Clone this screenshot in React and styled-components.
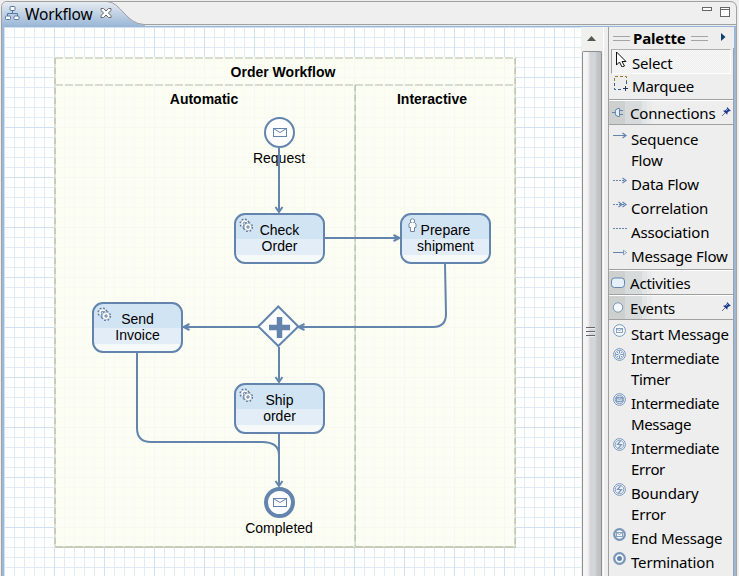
import React from "react";
import styled, { createGlobalStyle } from "styled-components";

const LINE = "#6284ad";
const GRAY = "#a0a0a0";

const GlobalStyle = createGlobalStyle`
  * { box-sizing: border-box; }
  body { margin: 0; background: #eeeeee; overflow: hidden; }
`;

const Window = styled.div`
  display: flex;
  flex-direction: column;
  width: 739px;
  height: 576px;
  background: #eeeeee;
  color: #000;
  font-family: "Noto Sans", "Open Sans", sans-serif;
  overflow: hidden;
`;

const TabBar = styled.header`
  position: relative;
  display: flex;
  align-items: center;
  height: 27px;
  flex: none;
`;
const TabShape = styled.svg`
  position: absolute;
  inset: 0;
`;
const TabIcon = styled.svg`
  position: relative;
  flex: none;
  margin: 0 5px 1px 4px;
`;
const TabTitle = styled.span`
  position: relative;
  width: 70px;
  font-size: 15.5px;
  letter-spacing: -0.15px;
  line-height: 20px;
  padding-top: 1px;
  white-space: nowrap;
`;
const CloseIcon = styled.svg`
  position: relative;
  flex: none;
  margin: -2px 0 0 5px;
`;
const WindowButtons = styled.svg`
  position: relative;
  margin: -5px 8px 0 auto;
`;

const Body = styled.main`
  display: grid;
  grid-template-columns: 577px 21px 6px 126px;
  height: 549px;
  margin-left: 1px;
  width: 736px;
  border-left: 1px solid ${GRAY};
  border-right: 1px solid ${GRAY};
  padding: 0 2px;
  background: #9cb8d8;
`;

const Canvas = styled.section`
  position: relative;
  overflow: hidden;
  font-family: "Liberation Sans", Arial, sans-serif;
  font-size: 14px;
  line-height: 16px;
  background-color: #fff;
  background-image:
    linear-gradient(90deg, #cfe1f2 1px, transparent 1px),
    linear-gradient(#cfe1f2 1px, transparent 1px),
    linear-gradient(90deg, #e0ebf8 1px, transparent 1px),
    linear-gradient(#e0ebf8 1px, transparent 1px);
  background-size: 50px 50px, 50px 50px, 10px 10px, 10px 10px;
`;

const Pool = styled.div`
  position: absolute;
  left: 50px;
  top: 30px;
  width: 462px;
  height: 491px;
  background: rgba(253, 254, 241, 0.84);
`;
const PoolTitle = styled.div`
  height: 28px;
  padding-top: 7px;
  padding-right: 4px;
  text-align: center;
  font-weight: bold;
`;
const Lanes = styled.div`
  display: grid;
  grid-template-columns: 300px 162px;
`;
const LaneTitle = styled.div`
  padding-top: 6px;
  text-align: center;
  font-weight: bold;
  padding-right: ${(p) => p.$shift || 0}px;
`;

const Drawing = styled.svg`
  position: absolute;
  inset: 0;
`;

const Task = styled.div`
  position: absolute;
  left: ${(p) => p.$x - 4}px;
  top: ${(p) => p.$y - 27}px;
  width: 91px;
  height: 51px;
  padding-top: 7px;
  border: 2px solid ${LINE};
  border-radius: 11px;
  text-align: center;
  white-space: pre-line;
  background: linear-gradient(#d1e4f4 0 24px, #e3edf8 24px 40px, #f5f9fa 40px);
`;
const TaskIcon = styled.svg`
  position: absolute;
  left: 3px;
  top: 3px;
`;
const NodeLabel = styled.div`
  position: absolute;
  left: 225px;
  width: 100px;
  top: ${(p) => p.$y}px;
  text-align: center;
`;

const ScrollBar = styled.div`
  display: flex;
  flex-direction: column;
  background: #f0f0ee;
`;
const ScrollArrow = styled.svg`
  flex: none;
  display: block;
`;
const Thumb = styled.div`
  flex: 1;
  display: flex;
  justify-content: center;
  margin-left: 1px;
  padding-top: 275px;
  padding-right: 3px;
  border: 1px solid #8e8e8e;
  border-bottom: 0;
  border-radius: 2px 2px 0 0;
  background: linear-gradient(90deg, #f5f5f5 0 4px, #e7e7e9 6px, #d4d5d9 7px 12px, #c5c6ca 14px, #bcbdbd);
`;
const Splitter = styled.div`
  background: linear-gradient(90deg, #eeeeee 0 1px, #fff 1px 2px, #eeeeee 2px);
`;

const Palette = styled.aside`
  display: flex;
  flex-direction: column;
  border-left: 1px solid ${GRAY};
  background: #eeeeee;
  overflow: hidden;
`;
const PaletteHead = styled.div`
  display: flex;
  align-items: center;
  height: 21px;
  padding: 1px 0 0 4px;
  font-weight: bold;
  font-size: 15px;
  letter-spacing: -0.15px;
`;
const Grip = styled.span`
  width: 17px;
  height: 5px;
  border: solid #a4a4a4;
  border-width: 1px 0;
`;
const PaletteName = styled.span`
  width: 54px;
  margin: 0 4px 0 3px;
  white-space: nowrap;
`;
const HeadArrow = styled.svg`
  margin: -3px 0 0 13px;
`;
const PaletteBody = styled.div`
  display: flex;
  flex-direction: column;
  flex: 1;
  border-right: 1px solid ${GRAY};
`;
const Tool = styled.div`
  display: flex;
  align-items: flex-start;
  height: ${(p) => (p.$active ? 25 : 26)}px;
  margin: 0 2px;
  margin-top: ${(p) => (p.$active ? 1 : 0)}px;
  border: 1px solid ${(p) => (p.$active ? "#fff" : "transparent")};
  border-top-color: ${(p) => (p.$active ? "#b0b0b0" : "transparent")};
  border-left-color: ${(p) => (p.$active ? "#a0a0a0" : "transparent")};
  background: ${(p) => (p.$active ? "repeating-conic-gradient(#eeeeee 0 25%, #f8f8f8 0 50%) 0 0 / 2px 2px" : "none")};
`;
const Drawer = styled.div`
  display: flex;
  align-items: center;
  flex: none;
  height: 25px;
  padding: 0 2px 0 1px;
  border-top: 1px solid #fff;
  border-bottom: 1px solid ${GRAY};
  box-shadow: 0 -1px ${GRAY};
  background: linear-gradient(90deg, #cdd0ce 0 16px, #d8dbdb 16px 33px, #e1e5e6 33px 38px, #e8eaeb 38px 43px, #eeeeee 43px);
`;
const Entries = styled.div`
  display: flex;
  flex-direction: column;
  flex: none;
  padding: 2px 0 2px 3px;
`;
const Entry = styled.div`
  display: flex;
  align-items: flex-start;
  padding: 1px 0;
`;
const IconSlot = styled.svg`
  flex: none;
  width: 16px;
  height: 16px;
  margin-right: ${(p) => p.$gap ?? 3}px;
  margin-top: ${(p) => p.$top || 0}px;
`;
const Text = styled.span`
  font-size: 15px;
  line-height: 21px;
  letter-spacing: ${(p) => p.$ls ?? -0.2}px;
  white-space: pre;
  padding-top: ${(p) => p.$top || 0}px;
`;
const Pin = styled.svg`
  margin: -3px 0 0 auto;
`;

const GearPaths = ({ x, y }) => (
  <g transform={`translate(${x} ${y})`}>
    <circle r="4.200" fill="#fff" stroke="#587496" strokeWidth="1.800" strokeDasharray="1.650 1.650" />
    <circle r="3.700" fill="#fff" stroke="#8199b6" strokeWidth=".5" />
    <circle r="1.200" fill="#d1e4f4" stroke="#587496" strokeWidth=".9" />
  </g>
);

const Gears = () => (
  <TaskIcon width="16" height="16" viewBox="0 0 16 16">
    <GearPaths x={5.5} y={5.5} />
    <GearPaths x={9} y={9} />
  </TaskIcon>
);

const Person = () => (
  <TaskIcon width="16" height="16" viewBox="0 0 16 16">
    <path d="M5.5 4.500L4 6v3.500h1.500V13.500h4V9.500H11V6L9.500 4.500z" fill="#fff" stroke="#7187a3" />
    <circle cx="7.500" cy="3" r="2.200" fill="#fff" stroke="#7187a3" />
    <path d="M6 5h3v8H6z" fill="#fff" />
  </TaskIcon>
);

const Envelope = ({ y }) => (
  <g fill="#fff" stroke={LINE}>
    <rect x="273.500" y={y - 4} width="13" height="8" />
    <path d={`M273.500 ${y - 4}l6.500 4 6.500-4`} fill="none" />
  </g>
);

const PinIcon = () => (
  <Pin width="9" height="9" viewBox="0 0 9 9">
    <path d="M0 9L3 6" stroke="#68718a" />
    <path d="M5 0l4 4-2 .3-1.500 1.500-.2 2L1 3.700l2-.2L4.800 2z" fill="#183b90" />
    <path d="M4 4l2-2" stroke="#8aa2da" />
  </Pin>
);

function EntryIcon({ kind }) {
  const flow = ["sequence", "data", "correlation", "association", "message"].includes(kind);
  if (flow) {
    const dash = kind === "sequence" || kind === "message" ? undefined : "2 1";
    return (
      <IconSlot viewBox="0 0 16 16" fill="none" stroke={LINE}>
        <path d={kind === "association" ? "M1 7.500h14" : "M1 7.500h13"} strokeDasharray={dash} />
        {(kind === "sequence" || kind === "data" || kind === "correlation") && <path d="M10.500 5l3.500 2.500-3.500 2.500" strokeWidth="1.200" />}
        {kind === "correlation" && <path d="M6.500 5l3.500 2.500-3.500 2.500" strokeWidth="1.200" />}
        {kind === "message" && <path d="M11.500 5.300l3 2.200-3 2.200z" fill="#fff" strokeWidth=".8" />}
      </IconSlot>
    );
  }
  const end = kind === "end" || kind === "termination";
  return (
    <IconSlot viewBox="0 0 16 16" fill="none" stroke="#7895b9">
      <circle cx="7.500" cy="7.500" r={end ? 5.300 : 5.900} fill="#f6f9fc" strokeWidth={end ? 2.200 : 1} />
      {!end && kind !== "start" && <circle cx="7.500" cy="7.500" r="4.300" strokeWidth=".9" fill={kind === "intermediate" ? "#c9d7e7" : "#edf2f8"} />}
      {(kind === "start" || kind === "intermediate" || kind === "end") && (
        <g strokeWidth=".85">
          <rect x="4.500" y="5.500" width="6" height="4" />
          <path d="M4.500 5.500l3 2 3-2" />
        </g>
      )}
      {kind === "timer" && <path d="M7.500 3.500v3m0 2v3M3.500 7.500h3m2 0h3M5 5l1.200 1.200M10 5L8.800 6.200M5 10l1.200-1.200M10 10L8.800 8.800" />}
      {kind === "error" && <path d="M8.500 4L5.500 7.500h4L6.500 11" strokeWidth="1.200" />}
      {kind === "termination" && <circle cx="7.500" cy="7.500" r="2.500" fill={LINE} stroke="none" />}
    </IconSlot>
  );
}

const connections = [
  { kind: "sequence", label: "Sequence\nFlow" },
  { kind: "data", label: "Data Flow" },
  { kind: "correlation", label: "Correlation" },
  { kind: "association", label: "Association" },
  { kind: "message", label: "Message Flow" },
];
const events = [
  { kind: "start", label: "Start Message" },
  { kind: "timer", label: "Intermediate\nTimer" },
  { kind: "intermediate", label: "Intermediate\nMessage" },
  { kind: "error", label: "Intermediate\nError" },
  { kind: "error", label: "Boundary\nError" },
  { kind: "end", label: "End Message" },
  { kind: "termination", label: "Termination" },
];

const EntryList = ({ items }) => (
  <Entries>
    {items.map((item) => (
      <Entry key={item.label}>
        <EntryIcon kind={item.kind} />
        <Text $top={1} $ls={item.label.startsWith("Inter") ? -0.35 : -0.17}>{item.label}</Text>
      </Entry>
    ))}
  </Entries>
);

function EditorTab() {
  return (
    <TabBar>
      <TabShape width="739" height="27">
        <defs>
          <linearGradient id="tab" x1="0" y1="0" x2="0" y2="1">
            <stop offset="0" stopColor="#e6ebf1" />
            <stop offset=".42" stopColor="#c4d4e6" />
            <stop offset="1" stopColor="#98b5d6" />
          </linearGradient>
        </defs>
        <path d="M1.500 27V7Q2 1.500 7 1.500H730Q736.500 1.500 736.500 8V27" fill="#efefef" stroke={GRAY} />
        <path d="M2 27V7Q3 2 8 2H107C121 2 126 24 144 24.500H736V27Z" fill="url(#tab)" />
        <path d="M107 1.500C121 2 126 24 144 24.500H736" fill="none" stroke={GRAY} />
        <path d="M145 25.500H736" stroke="#e4ebf2" />
        <path d="M2 26.500H736" stroke="#98b5d6" />
      </TabShape>
      <TabIcon width="16" height="16" viewBox="0 0 16 16" fill="#fff" stroke="#5876a3">
        <path d="M8.500 5v3.500M3.500 11V8.500h10V11" fill="none" />
        <rect x="6" y="1.500" width="5" height="4" rx="1" />
        <rect x="1.500" y="11" width="5" height="3.500" rx="1" />
        <rect x="10" y="11" width="5" height="3.500" rx="1" />
      </TabIcon>
      <TabTitle>Workflow</TabTitle>
      <CloseIcon width="12" height="12" viewBox="0 0 12 12">
        <path d="M1 1.500h2.500L6 4l2.500-2.500H11V3.500L8.300 6l2.700 2.500v2H8.500L6 8l-2.500 2.500H1v-2L3.700 6 1 3.500z" fill="#fff" stroke="#686868" />
      </CloseIcon>
      <WindowButtons width="30" height="12" fill="#fff" stroke="#676767">
        <rect x="1.500" y="2.500" width="9" height="3" />
        <rect x="19.500" y="2.500" width="9" height="9" />
        <path d="M19 4.500h10" />
      </WindowButtons>
    </TabBar>
  );
}

function Diagram() {
  return (
    <Canvas>
      <Pool>
        <PoolTitle>Order Workflow</PoolTitle>
        <Lanes>
          <LaneTitle>Automatic</LaneTitle>
          <LaneTitle $shift={6}>Interactive</LaneTitle>
        </Lanes>
      </Pool>
      <Drawing width="577" height="549" viewBox="4 27 577 549" fill="none">
        <g stroke="#cbd1c2" strokeWidth="1.600" strokeDasharray="8 2">
          <path d="M55 58H516M55 85H516" />
          <path d="M55 58V547M515.200 58V547M355.200 85V547" stroke="#d5dbcd" strokeDasharray="none" />
          <path d="M55 58V547M515.200 58V547M355.200 85V547" stroke="#c0c8b5" strokeDasharray="6 4" />
          <path d="M55 547H516" stroke="#c6ccba" strokeWidth="2" strokeDasharray="none" />
          <path d="M55 546.500H516" stroke="#e2e6da" strokeWidth="1" strokeDasharray="2 8" strokeDashoffset="2" />
        </g>
        <circle cx="279.500" cy="132.500" r="14.500" fill="#fff" stroke={LINE} strokeWidth="2" />
        <Envelope y={132.500} />
        <path d="M278.300 306.500l20 20-20 19.500-20-19.500z" fill="#fff" stroke={LINE} strokeWidth="2" />
        <path d="M279.500 317v21M269 327.500h21" stroke={LINE} strokeWidth="5.500" />
      </Drawing>
      <NodeLabel $y={123}>Request</NodeLabel>
      <Drawing width="577" height="549" viewBox="4 27 577 549" fill="none" stroke={LINE} strokeWidth="2">
        <path d="M279 148V212M275.500 207l3.500 5 3.500-5M325 238H399M393.500 235l6 3-6 3" />
        <path d="M445 264L446 314Q446 327 433 327H300M304.500 324l-6 3 6 3" />
        <path d="M258 327H184M189.500 324l-6 3 6 3M279 347V382M275.500 377l3.500 5 3.500-5" />
        <path d="M137 353V428Q137 442 151 442H262Q279 442 279 455M279 434V486M275.500 481l3.500 5 3.500-5" />
        <circle cx="279.500" cy="502.500" r="13.500" fill="#fff" strokeWidth="4" />
        <g strokeWidth="1"><Envelope y={502.500} /></g>
      </Drawing>
      <Task $x={234} $y={213}><Gears />{"Check\nOrder"}</Task>
      <Task $x={400} $y={213}><Person />{"Prepare\nshipment"}</Task>
      <Task $x={92} $y={302}><Gears />{"Send\nInvoice"}</Task>
      <Task $x={234} $y={383}><Gears />{"Ship\norder"}</Task>
      <NodeLabel $y={493}>Completed</NodeLabel>
    </Canvas>
  );
}

export default function App() {
  return (
    <Window>
      <GlobalStyle />
      <EditorTab />
      <Body>
        <Diagram />
        <ScrollBar>
          <ScrollArrow width="21" height="24"><path d="M6 14l4.500-5 4.500 5z" fill="#555" /></ScrollArrow>
          <Thumb>
            <svg width="9" height="12" stroke="#666" fill="none"><path d="M0 .5h9M0 4.500h9M0 8.500h9" /><path d="M0 1.500h9M0 5.500h9M0 9.500h9" stroke="#eee" /></svg>
          </Thumb>
        </ScrollBar>
        <Splitter />
        <Palette>
          <PaletteHead>
            <Grip /><PaletteName>Palette</PaletteName><Grip />
            <HeadArrow width="5" height="8"><path d="M0 0l4.500 4L0 8z" fill="#113f6c" /></HeadArrow>
          </PaletteHead>
          <PaletteBody>
            <Tool $active>
              <IconSlot $top={1} $gap={4} viewBox="0 0 16 16"><path d="M4.500 1v13l3-3 2.500 5 2.500-1-2.500-4.500h4z" fill="#fff" stroke="#111" /></IconSlot>
              <Text $top={3}>Select</Text>
            </Tool>
            <Tool>
              <IconSlot $top={0} $gap={4} viewBox="0 0 16 16" fill="none">
                <path d="M2.500 6V1.500H14.500V6" stroke="#927d29" strokeDasharray="3 2" />
                <path d="M2.500 8v6.500H9M14.500 6v3" stroke="#315f91" strokeDasharray="3 2" />
                <path d="M11 13.500h5M13.500 11v5" stroke="#27395f" />
              </IconSlot>
              <Text $top={1}>Marquee</Text>
            </Tool>
            <Drawer>
              <IconSlot $gap={4} viewBox="0 0 16 16" stroke={LINE} fill="#e4f0fa"><path d="M2 7.500h4M13 5.500H9M13 9.500H9M9.500 3.500H8Q5 4 5 7.500T8 11.500h1.500z" /></IconSlot>
              <Text $top={2}>Connections</Text><PinIcon />
            </Drawer>
            <EntryList items={connections} />
            <Drawer>
              <IconSlot $gap={4} viewBox="0 0 16 16" stroke={LINE} fill="#e4f0fa"><rect x="1.500" y="3" width="13" height="9.500" rx="3" /></IconSlot>
              <Text $top={2}>Activities</Text>
            </Drawer>
            <Drawer>
              <IconSlot $gap={4} viewBox="0 0 16 16" stroke="#7895b9" fill="#f4f9fd"><circle cx="8" cy="7.500" r="4.700" /></IconSlot>
              <Text $top={2}>Events</Text><PinIcon />
            </Drawer>
            <EntryList items={events} />
          </PaletteBody>
        </Palette>
      </Body>
    </Window>
  );
}
